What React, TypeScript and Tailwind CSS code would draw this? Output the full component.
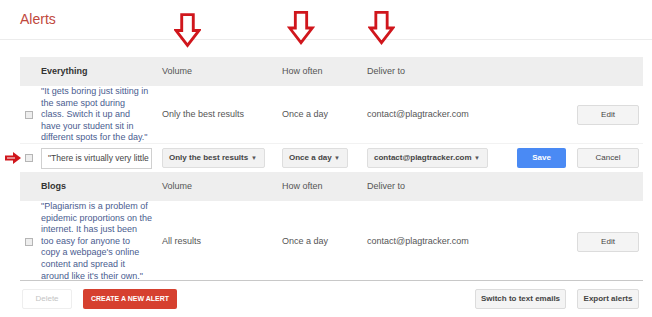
const COLS = "grid grid-cols-[21px_121px_120px_85px_150px_60px_66px]";

// contorno vermelho das setas de anotação
function DownArrow({ className }: { className: string }) {
  return (
    <svg className={className} viewBox="0 0 28 36" fill="white" stroke="#d0161c" strokeWidth="3" strokeLinejoin="miter">
      <path d="M8 1.5 H20 V18 H26 L14 33.5 L2 18 H8 Z" />
    </svg>
  );
}

function RightArrow() {
  return (
    <svg className="absolute left-[5px] top-[152px] h-[12px] w-[16px]" viewBox="0 0 16 12" fill="#d0161c">
      <path d="M0 3.5 H8 V0 L16 6 L8 12 V8.5 H0 Z" />
      <path d="M2 6 H10" stroke="white" strokeWidth="1" />
    </svg>
  );
}

function Checkbox() {
  return <div className="h-[8px] w-[8px] border border-[#b5b5b5] bg-[#eeeeee] ml-[5px]" />;
}

function GrayButton({ label, className }: { label: string; className: string }) {
  return (
    <button
      type="button"
      className={`flex h-[20px] items-center justify-center rounded-[2px] border border-[#dcdcdc] bg-[#f4f4f4] text-[8px] font-bold text-[#444] ${className}`}
    >
      {label}
    </button>
  );
}

function Select({ label, className }: { label: string; className: string }) {
  return (
    <div
      className={`flex h-[20px] items-center justify-between rounded-[2px] border border-[#dedede] bg-[#f2f2f2] pl-[6px] pr-[7px] text-[8px] font-bold text-[#444] ${className}`}
    >
      <span className="whitespace-nowrap">{label}</span>
      <span className="text-[6px] text-[#555]">▼</span>
    </div>
  );
}

function HeaderRow({ title }: { title: string }) {
  return (
    <div className={`${COLS} h-[29px] items-center bg-[#eeeeee] text-[9px] text-[#555]`}>
      <div />
      <div className="font-bold text-[#333]">{title}</div>
      <div>Volume</div>
      <div>How often</div>
      <div>Deliver to</div>
    </div>
  );
}

function Quote({ lines }: { lines: string[] }) {
  return (
    <div className="text-[9px] leading-[11.6px] text-[#4a5c8f]">
      {lines.map((line) => (
        <div key={line} className="whitespace-nowrap">
          {line}
        </div>
      ))}
    </div>
  );
}

export default function App() {
  return (
    <div className="relative h-[317px] w-[652px] overflow-hidden bg-white font-['Liberation_Sans',Arial,sans-serif]">
      <div className="h-[40px] border-b border-[#ececec] pl-[20px] pt-[9px] text-[14px] text-[#c0473c]">Alerts</div>

      <DownArrow className="absolute left-[174px] top-[12px] h-[37px] w-[27px]" />
      <DownArrow className="absolute left-[287px] top-[11px] h-[34px] w-[28px]" />
      <DownArrow className="absolute left-[368px] top-[11px] h-[34px] w-[27px]" />
      <RightArrow />

      <div className="ml-[20px] mt-[17px] w-[623px]">
        <HeaderRow title="Everything" />

        <div className={`${COLS} h-[58px] items-center border-b border-[#f2f2f2] text-[9px] text-[#555]`}>
          <Checkbox />
          <Quote
            lines={[
              "\"It gets boring just sitting in",
              "the same spot during",
              "class. Switch it up and",
              "have your student sit in",
              "different spots for the day.\"",
            ]}
          />
          <div>Only the best results</div>
          <div>Once a day</div>
          <div>contact@plagtracker.com</div>
          <div />
          <GrayButton label="Edit" className="w-[62px] font-normal" />
        </div>

        <div className={`${COLS} h-[28px] items-center`}>
          <Checkbox />
          <div className="flex h-[21px] w-[111px] items-center whitespace-nowrap border border-[#d0d0d0] pl-[6px] text-[8.5px] text-[#444]">
            "There is virtually very little
          </div>
          <Select label="Only the best results" className="w-[103px]" />
          <Select label="Once a day" className="w-[66px]" />
          <Select label="contact@plagtracker.com" className="w-[121px]" />
          <button
            type="button"
            className="flex h-[20px] w-[49px] items-center justify-center rounded-[2px] bg-[#4a8af4] text-[8px] font-bold text-white"
          >
            Save
          </button>
          <GrayButton label="Cancel" className="w-[62px] font-normal" />
        </div>

        <HeaderRow title="Blogs" />

        <div className={`${COLS} h-[80px] items-center border-b border-[#c8c8c8] text-[9px] text-[#555]`}>
          <Checkbox />
          <Quote
            lines={[
              "\"Plagiarism is a problem of",
              "epidemic proportions on the",
              "internet. It has just been",
              "too easy for anyone to",
              "copy a webpage's online",
              "content and spread it",
              "around like it's their own.\"",
            ]}
          />
          <div>All results</div>
          <div>Once a day</div>
          <div>contact@plagtracker.com</div>
          <div />
          <GrayButton label="Edit" className="w-[62px] font-normal" />
        </div>

        <div className="mt-[8px] flex items-center">
          <button
            type="button"
            className="ml-[2px] flex h-[20px] w-[50px] items-center justify-center rounded-[2px] border border-[#eeeeee] bg-white text-[8px] text-[#c4c4c4]"
          >
            Delete
          </button>
          <button
            type="button"
            className="ml-[11px] flex h-[20px] w-[94px] items-center justify-center rounded-[2px] bg-[#d6402f] text-[7px] font-bold text-white"
          >
            CREATE A NEW ALERT
          </button>
          <GrayButton label="Switch to text emails" className="ml-auto w-[91px]" />
          <GrayButton label="Export alerts" className="ml-[11px] mr-[4px] w-[62px]" />
        </div>
      </div>
    </div>
  );
}
